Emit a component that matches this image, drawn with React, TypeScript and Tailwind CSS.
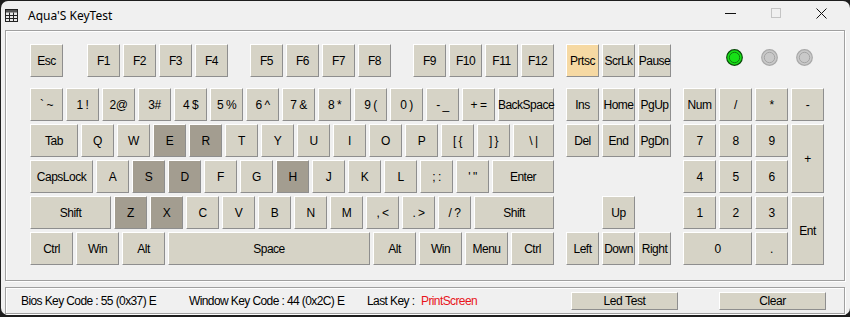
import React from 'react'

type Tone = 'off' | 'on' | 'hot'
type K = { l: string; w?: string; t?: Tone; cls?: string }

const TONE: Record<Tone, string> = {
  off: 'bg-[#d6d3c6]',
  on: 'bg-[#a39d90]',
  hot: 'bg-[#f6d9a3]',
}

function Key({ l, w = 'w-[33px]', t = 'off', cls = '' }: K) {
  return (
    <div
      className={`${w} ${cls} ${TONE[t]} flex h-[33px] shrink-0 items-center justify-center border border-t-white border-l-white border-b-[#8e8e8e] border-r-[#8e8e8e] text-[12px] tracking-[-0.5px] text-black whitespace-nowrap`}
    >
      {l}
    </div>
  )
}

const ROWS: K[][] = [
  [
    { l: '` ~' }, { l: '1 !' }, { l: '2@' }, { l: '3#' }, { l: '4 $' }, { l: '5 %' }, { l: '6 ^' },
    { l: '7 &' }, { l: '8 *' }, { l: '9 (' }, { l: '0 )' }, { l: '- _' }, { l: '+ =' },
    { l: 'BackSpace', w: 'w-[56px]' },
  ],
  [
    { l: 'Tab', w: 'w-[48px]' }, { l: 'Q' }, { l: 'W' }, { l: 'E', t: 'on' }, { l: 'R', t: 'on' },
    { l: 'T' }, { l: 'Y' }, { l: 'U' }, { l: 'I' }, { l: 'O' }, { l: 'P' }, { l: '[ {' }, { l: '] }' },
    { l: '\\ |', w: 'w-[41px]' },
  ],
  [
    { l: 'CapsLock', w: 'w-[63px]' }, { l: 'A' }, { l: 'S', t: 'on' }, { l: 'D', t: 'on' }, { l: 'F' },
    { l: 'G' }, { l: 'H', t: 'on' }, { l: 'J' }, { l: 'K' }, { l: 'L' }, { l: '; :' }, { l: '\' "' },
    { l: 'Enter', w: 'w-[62px]' },
  ],
  [
    { l: 'Shift', w: 'w-[81px]' }, { l: 'Z', t: 'on' }, { l: 'X', t: 'on' }, { l: 'C' }, { l: 'V' },
    { l: 'B' }, { l: 'N' }, { l: 'M' }, { l: ', <' }, { l: '. >' }, { l: '/ ?' },
    { l: 'Shift', w: 'w-[80px]' },
  ],
  [
    { l: 'Ctrl', w: 'w-[43px]' }, { l: 'Win', w: 'w-[43px]' }, { l: 'Alt', w: 'w-[43px]' },
    { l: 'Space', w: 'w-[202px]' }, { l: 'Alt', w: 'w-[43px]' }, { l: 'Win', w: 'w-[43px]' },
    { l: 'Menu', w: 'w-[43px]' }, { l: 'Ctrl', w: 'w-[43px]' },
  ],
]

const NAV: K[] = [
  { l: 'Ins' }, { l: 'Home' }, { l: 'PgUp' }, { l: 'Del' }, { l: 'End' }, { l: 'PgDn' },
  { l: 'Up', cls: 'col-start-2 row-start-4' },
  { l: 'Left', cls: 'col-start-1 row-start-5' },
  { l: 'Down', cls: 'col-start-2 row-start-5' },
  { l: 'Right', cls: 'col-start-3 row-start-5' },
]

const PAD: K[] = [
  { l: 'Num' }, { l: '/' }, { l: '*' }, { l: '-' },
  { l: '7' }, { l: '8' }, { l: '9' }, { l: '+', cls: 'row-span-2 !h-auto' },
  { l: '4' }, { l: '5' }, { l: '6' },
  { l: '1' }, { l: '2' }, { l: '3' }, { l: 'Ent', cls: 'row-span-2 !h-auto' },
  { l: '0', w: 'w-auto', cls: 'col-span-2' }, { l: '.' },
]

function Led({ on }: { on?: boolean }) {
  const ring = on ? '#0b4d0b' : '#a9a9a9'
  const fill = on ? '#17e017' : '#c9c9c9'
  const inner = on ? '#0f7a0f' : '#a4a4a4'
  return (
    <svg width="17" height="17" viewBox="0 0 17 17" className="shrink-0">
      <circle cx="8.5" cy="8.5" r="7.8" fill={fill} stroke={ring} strokeWidth="1.2" />
      <circle cx="8.5" cy="8.5" r="5.2" fill={fill} stroke={inner} strokeWidth="1" />
    </svg>
  )
}

function AppIcon() {
  return (
    <svg width="13" height="13" viewBox="0 0 13 13" className="shrink-0">
      <rect x="0.5" y="0.5" width="12" height="12" fill="#e8e8e8" stroke="#222" />
      <rect x="1" y="1" width="11" height="2.5" fill="#555" />
      <path d="M4.5 3.5V12.5M8.5 3.5V12.5M0.5 6.5H12.5M0.5 9.5H12.5" stroke="#222" strokeWidth="1" />
    </svg>
  )
}

function SmallButton({ label }: { label: string }) {
  return (
    <div className="flex h-[18px] w-[107px] items-center justify-center border border-t-white border-l-white border-b-[#8e8e8e] border-r-[#8e8e8e] bg-[#d6d3c6] text-[12px] tracking-[-0.4px] text-black">
      {label}
    </div>
  )
}

export default function App() {
  return (
    <div className="h-[317px] w-[850px] overflow-hidden bg-[#1e1e1e] pl-[1px] pt-[1px] font-['Liberation_Sans',Arial,sans-serif]">
      <div className="flex h-[314px] w-[849px] flex-col overflow-hidden rounded-[7px] bg-[#f0f0f0]">
        {/* title bar */}
        <div className="flex h-[29px] shrink-0 items-center pl-[4px]">
          <AppIcon />
          <span className="ml-[10px] font-['Noto_Sans','Open_Sans',sans-serif] text-[12px] text-black">Aqua'S KeyTest</span>
          <div className="ml-auto flex items-center">
            <svg width="46" height="29" viewBox="0 0 46 29"><path d="M18 12.5H29" stroke="#111" strokeWidth="1" /></svg>
            <svg width="46" height="29" viewBox="0 0 46 29"><rect x="18.5" y="7.5" width="9" height="9" fill="none" stroke="#c4c4c4" strokeWidth="1" /></svg>
            <svg width="46" height="29" viewBox="0 0 46 29" className="mr-[5px]"><path d="M17.5 7.5L27.5 17.5M27.5 7.5L17.5 17.5" stroke="#111" strokeWidth="1" /></svg>
          </div>
        </div>

        {/* keyboard group */}
        <div className="ml-[4px] flex h-[251px] w-[840px] gap-[12px] border border-[#a0a0a0] pl-[24px] pt-[13px] shadow-[inset_1px_1px_0_#fff,1px_1px_0_#fff]">
          <div className="flex w-[524px] flex-col">
            <div className="flex">
              <Key l="Esc" />
              <div className="ml-[24px] flex gap-[3px]"><Key l="F1" /><Key l="F2" /><Key l="F3" /><Key l="F4" /></div>
              <div className="ml-[22px] flex gap-[3px]"><Key l="F5" /><Key l="F6" /><Key l="F7" /><Key l="F8" /></div>
              <div className="ml-[22px] flex gap-[3px]"><Key l="F9" /><Key l="F10" /><Key l="F11" /><Key l="F12" /></div>
            </div>
            <div className="mt-[11px] flex flex-col gap-[3px]">
              {ROWS.map((row, i) => (
                <div key={i} className="flex gap-[3px]">
                  {row.map((k, j) => <Key key={j} {...k} />)}
                </div>
              ))}
            </div>
          </div>

          <div className="flex w-[105px] flex-col">
            <div className="flex gap-[3px]">
              <Key l="Prtsc" t="hot" />
              <Key l="ScrLk" />
              <Key l="Pause" />
            </div>
            <div className="mt-[11px] grid grid-cols-[repeat(3,33px)] grid-rows-[repeat(5,33px)] gap-[3px]">
              {NAV.map((k, i) => <Key key={i} {...k} />)}
            </div>
          </div>

          <div className="flex w-[141px] flex-col">
            <div className="flex h-[33px] items-start gap-[18px] pl-[43px] pt-[5px]">
              <Led on />
              <Led />
              <Led />
            </div>
            <div className="mt-[11px] grid grid-cols-[repeat(4,33px)] grid-rows-[repeat(5,33px)] gap-[3px]">
              {PAD.map((k, i) => <Key key={i} {...k} />)}
            </div>
          </div>
        </div>

        {/* status group */}
        <div className="ml-[4px] mt-[6px] flex h-[27px] w-[840px] items-center border border-[#a0a0a0] pl-[15px] text-[12px] tracking-[-0.6px] text-black shadow-[inset_1px_1px_0_#fff,1px_1px_0_#fff]">
          <span className="w-[168px]">Bios Key Code : 55 (0x37) E</span>
          <span className="w-[178px]">Window Key Code : 44 (0x2C) E</span>
          <span className="flex w-[204px]">
            <span className="w-[54px]">Last Key :</span>
            <span className="text-[#e8141c]">PrintScreen</span>
          </span>
          <SmallButton label="Led Test" />
          <div className="w-[41px]" />
          <SmallButton label="Clear" />
        </div>
      </div>
    </div>
  )
}
